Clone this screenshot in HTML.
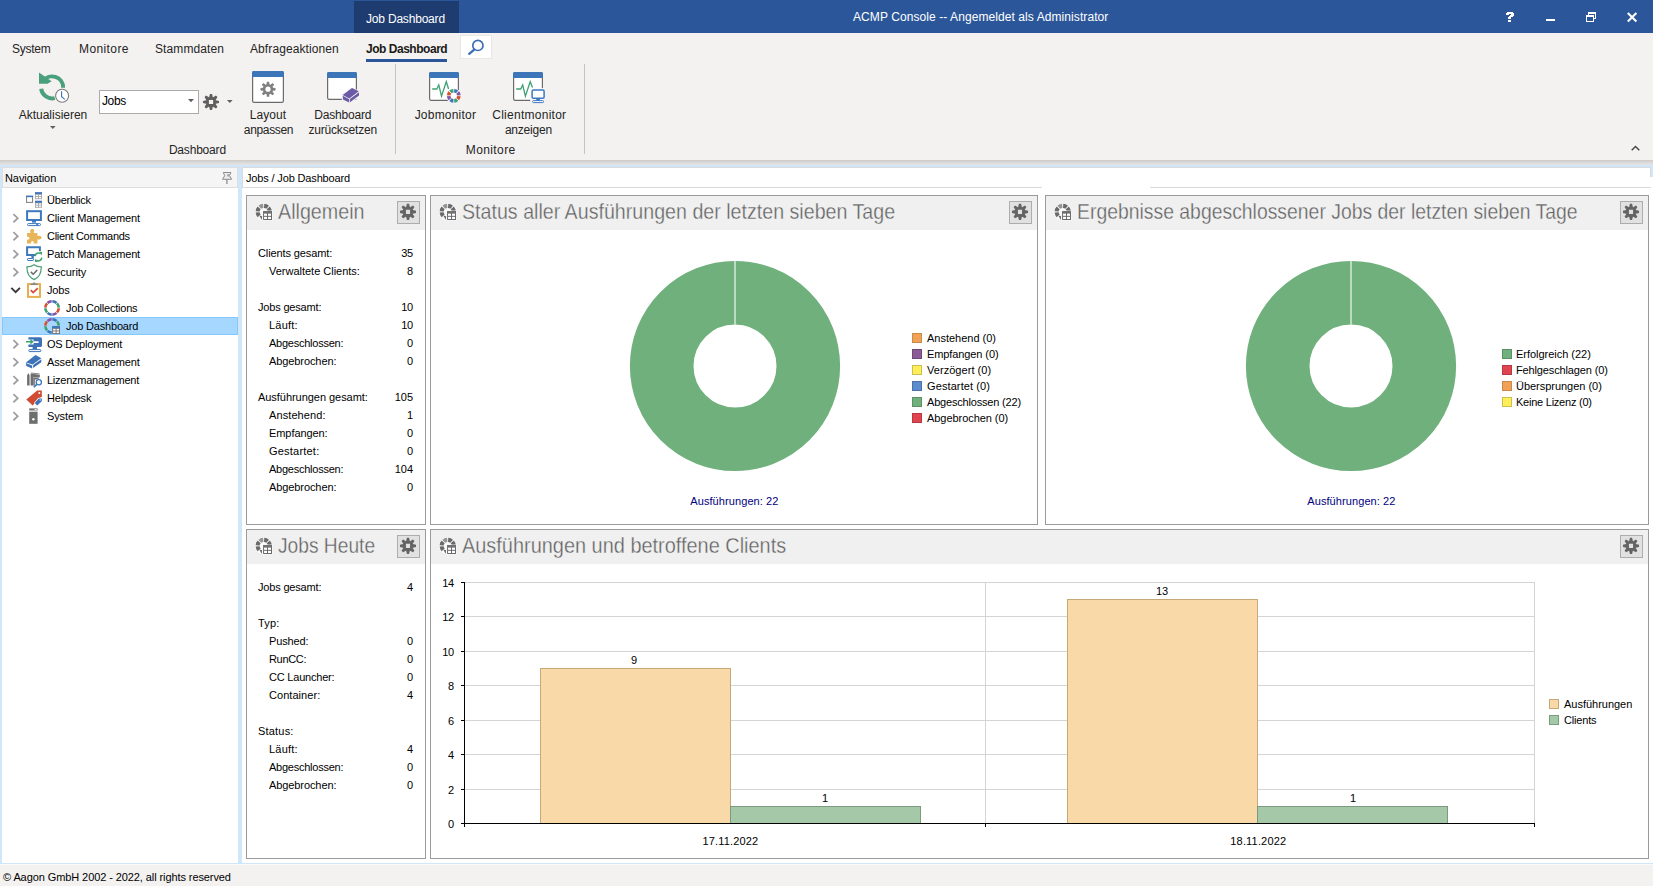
<!DOCTYPE html>
<html lang="de">
<head>
<meta charset="utf-8">
<title>ACMP Console</title>
<style>
html,body{margin:0;padding:0;}
body{width:1653px;height:886px;position:relative;overflow:hidden;background:#fff;font-family:"Liberation Sans",sans-serif;font-size:11px;color:#000;}
.a{position:absolute;}
.t{position:absolute;white-space:nowrap;line-height:1;font-size:11px;}
svg{position:absolute;overflow:visible;}
#titlebar{left:0;top:0;width:1653px;height:33px;background:#2b579a;}
#ctxtab{left:354px;top:1px;width:105px;height:32px;background:#1e3c6f;}
#ribbon{left:0;top:33px;width:1653px;height:127px;background:#f3f2f1;}
.sep{width:1px;background:#c6c4c2;top:64px;height:90px;}
.g{background:#dadada;}
.bl{background:#cfe6fb;}
.sel{left:2px;top:317px;width:236px;height:18px;background:#a6d8ff;border:1px solid #84c8fb;box-sizing:border-box;}
.panel{border:1px solid #9b9b9b;box-sizing:border-box;background:#fff;}
.phead{position:absolute;left:0;top:0;right:0;height:34px;background:#f0f0f0;}
.ptitle{position:absolute;top:4px;left:31px;font-size:21.5px;color:#606060;white-space:nowrap;line-height:24px;transform-origin:0 50%;-webkit-text-stroke:0.35px #f0f0f0;}
.gearbtn{position:absolute;top:5px;right:5px;width:23px;height:23px;box-sizing:border-box;border:1px solid #adadad;background:#e1e1e1;}
.sw{position:absolute;width:10px;height:10px;box-sizing:border-box;}
</style>
</head>
<body>
<div class="a" id="titlebar"></div><div class="a" id="ctxtab"></div>
<div class="t" style="top:13px;left:366px;font-size:12px;color:#fff;letter-spacing:-0.192px;">Job Dashboard</div>
<div class="t" style="top:11px;left:853px;font-size:12px;color:#fff;letter-spacing:0.08px;">ACMP Console -- Angemeldet als Administrator</div>
<svg style="left:0;top:0" width="1653" height="886" ><g shape-rendering="crispEdges"><rect x="1507" y="12" width="6" height="1" fill="#fff"/><rect x="1506" y="13" width="8" height="1" fill="#fff"/><rect x="1506" y="14" width="3" height="1" fill="#fff"/><rect x="1511" y="14" width="3" height="1" fill="#fff"/><rect x="1510" y="15" width="4" height="1" fill="#fff"/><rect x="1509" y="16" width="4" height="1" fill="#fff"/><rect x="1508" y="17" width="3" height="1" fill="#fff"/><rect x="1508" y="18" width="3" height="1" fill="#fff"/><rect x="1508" y="20" width="3" height="1" fill="#fff"/><rect x="1508" y="21" width="3" height="1" fill="#fff"/><rect x="1546" y="19" width="9" height="2" fill="#fff"/><rect x="1588" y="12" width="8" height="1" fill="#fff"/><rect x="1588" y="13" width="8" height="1" fill="#fff"/><rect x="1588" y="14" width="1" height="1" fill="#fff"/><rect x="1595" y="14" width="1" height="1" fill="#fff"/><rect x="1595" y="15" width="1" height="1" fill="#fff"/><rect x="1595" y="16" width="1" height="1" fill="#fff"/><rect x="1595" y="17" width="1" height="1" fill="#fff"/><rect x="1594" y="18" width="2" height="1" fill="#fff"/><rect x="1586" y="15" width="8" height="1" fill="#fff"/><rect x="1586" y="16" width="8" height="1" fill="#fff"/><rect x="1586" y="17" width="1" height="1" fill="#fff"/><rect x="1593" y="17" width="1" height="1" fill="#fff"/><rect x="1586" y="18" width="1" height="1" fill="#fff"/><rect x="1593" y="18" width="1" height="1" fill="#fff"/><rect x="1586" y="19" width="1" height="1" fill="#fff"/><rect x="1593" y="19" width="1" height="1" fill="#fff"/><rect x="1586" y="20" width="1" height="1" fill="#fff"/><rect x="1593" y="20" width="1" height="1" fill="#fff"/><rect x="1586" y="21" width="8" height="1" fill="#fff"/></g><path d="M1627.8 13L1636.4 21.6M1636.4 13L1627.8 21.6" stroke="#fff" stroke-width="2.1" fill="none"/></svg>
<div class="a" id="ribbon"></div>
<div class="t" style="top:43px;left:12px;font-size:12px;color:#252423;letter-spacing:-0.253px;">System</div>
<div class="t" style="top:43px;left:79px;font-size:12px;color:#252423;letter-spacing:0.402px;">Monitore</div>
<div class="t" style="top:43px;left:155px;font-size:12px;color:#252423;letter-spacing:0.105px;">Stammdaten</div>
<div class="t" style="top:43px;left:250px;font-size:12px;color:#252423;letter-spacing:0.093px;">Abfrageaktionen</div>
<div class="t" style="top:43px;left:366px;font-size:12px;font-weight:bold;color:#1b1a19;letter-spacing:-0.474px;">Job Dashboard</div>
<div class="a" style="left:366px;top:59px;width:81px;height:3px;background:#2b579a;"></div>
<div class="a" style="left:461px;top:36px;width:30px;height:22px;background:#fff;box-shadow:0 0 0 1px #e9e8e7;"></div>
<svg style="left:0;top:0" width="1653" height="886" ><circle cx="477.9" cy="45.4" r="5.1" fill="none" stroke="#3c6fb2" stroke-width="1.7"/><path d="M473.9 49.9L469.2 53.8" stroke="#3c6fb2" stroke-width="2.3" fill="none" stroke-linecap="round"/></svg>
<svg style="left:0;top:0" width="1653" height="886" ><path d="M42.77 81.57A11.0 11.0 0 0 1 63.09 87.78" fill="none" stroke="#4a9f7c" stroke-width="4"/><path d="M41.18 88.74A11.0 11.0 0 0 0 54.76 98.07" fill="none" stroke="#4a9f7c" stroke-width="4"/><path d="M39 72.4L39 83.8L47.5 83.8L51.6 81.2Z" fill="#4a9f7c"/><circle cx="62.1" cy="95.8" r="6.5" fill="#fff" stroke="#7c7c7c" stroke-width="1.1"/><path d="M61.6 91.3V96.8L64.8 99.4" fill="none" stroke="#3c6fc0" stroke-width="1.1"/><path d="M209.14 97.15 L209.94 93.97 L212.06 93.97 L212.86 97.15 L213.12 97.25 L215.93 95.57 L217.43 97.07 L215.75 99.88 L215.85 100.14 L219.03 100.94 L219.03 103.06 L215.85 103.86 L215.75 104.12 L217.43 106.93 L215.93 108.43 L213.12 106.75 L212.86 106.85 L212.06 110.03 L209.94 110.03 L209.14 106.85 L208.88 106.75 L206.07 108.43 L204.57 106.93 L206.25 104.12 L206.15 103.86 L202.97 103.06 L202.97 100.94 L206.15 100.14 L206.25 99.88 L204.57 97.07 L206.07 95.57 L208.88 97.25Z M208.90 99.90v4.20h4.20v-4.20Z" fill="#5f5f5f" fill-rule="evenodd"/><rect x="252.6" y="71.6" width="30.8" height="30.8" rx="1.6" fill="#fff" stroke="#6b6b6b" stroke-width="1.2"/><path d="M252 77v-4.4a1.6 1.6 0 0 1 1.6 -1.6h28.8a1.6 1.6 0 0 1 1.6 1.6v4.4z" fill="#3d76b8"/><path d="M266.57 84.20 L266.81 81.69 L269.19 81.69 L269.43 84.20 L270.52 84.65 L272.47 83.05 L274.15 84.73 L272.55 86.68 L273.00 87.77 L275.51 88.01 L275.51 90.39 L273.00 90.63 L272.55 91.72 L274.15 93.67 L272.47 95.35 L270.52 93.75 L269.43 94.20 L269.19 96.71 L266.81 96.71 L266.57 94.20 L265.48 93.75 L263.53 95.35 L261.85 93.67 L263.45 91.72 L263.00 90.63 L260.49 90.39 L260.49 88.01 L263.00 87.77 L263.45 86.68 L261.85 84.73 L263.53 83.05 L265.48 84.65Z M265.40 89.20a2.6 2.6 0 1 0 5.2 0a2.6 2.6 0 1 0 -5.2 0Z" fill="#7f7f7f" fill-rule="evenodd"/><rect x="327.6" y="72.6" width="28.8" height="26.8" rx="1.6" fill="#fff" stroke="#6b6b6b" stroke-width="1.2"/><path d="M327 78v-4.4a1.6 1.6 0 0 1 1.6 -1.6h26.8a1.6 1.6 0 0 1 1.6 1.6v4.4z" fill="#3d76b8"/><path d="M341.6 94.6L352 87.2L360 91.2L360 96.4L349.6 103.4L341.8 99.8Z" fill="#f3f2f1"/><path d="M342.7 94.9L352 87.9L358.7 91.2L349.3 98.5Z" fill="#6b5ba7"/><path d="M342.7 95.7L349.2 99.2L349.2 102.5L343 99.4Z" fill="#6b5ba7"/><path d="M350 99L359 92.2L359 95.6L350 102.3Z" fill="#6b5ba7"/><rect x="429.6" y="72.6" width="28.8" height="27.8" rx="1.6" fill="#fff" stroke="#6b6b6b" stroke-width="1.2"/><path d="M429 78v-4.4a1.6 1.6 0 0 1 1.6 -1.6h26.8a1.6 1.6 0 0 1 1.6 1.6v4.4z" fill="#3d76b8"/><path d="M432.2 89H436.8L438.8 84.9L441.5 96.2L446.3 81.7L448.6 89" fill="none" stroke="#3fa174" stroke-width="1.3" stroke-linejoin="miter"/><circle cx="453.8" cy="95.8" r="7.6" fill="#f3f2f1"/><circle cx="453.8" cy="95.8" r="5" fill="#fff"/><path d="M454.20 90.72A5.1 5.1 0 0 1 457.11 91.92" fill="none" stroke="#3d74b9" stroke-width="3.6000000000000005"/><path d="M457.68 92.49A5.1 5.1 0 0 1 458.88 95.40" fill="none" stroke="#8653a6" stroke-width="3.6000000000000005"/><path d="M458.88 96.20A5.1 5.1 0 0 1 457.68 99.11" fill="none" stroke="#d8512f" stroke-width="3.6000000000000005"/><path d="M457.11 99.68A5.1 5.1 0 0 1 454.20 100.88" fill="none" stroke="#3fa174" stroke-width="3.6000000000000005"/><path d="M453.40 100.88A5.1 5.1 0 0 1 450.49 99.68" fill="none" stroke="#3d74b9" stroke-width="3.6000000000000005"/><path d="M449.92 99.11A5.1 5.1 0 0 1 448.72 96.20" fill="none" stroke="#8653a6" stroke-width="3.6000000000000005"/><path d="M448.72 95.40A5.1 5.1 0 0 1 449.92 92.49" fill="none" stroke="#d8512f" stroke-width="3.6000000000000005"/><path d="M450.49 91.92A5.1 5.1 0 0 1 453.40 90.72" fill="none" stroke="#3fa174" stroke-width="3.6000000000000005"/><rect x="513.6" y="72.6" width="28.8" height="27.8" rx="1.6" fill="#fff" stroke="#6b6b6b" stroke-width="1.2"/><path d="M513 78v-4.4a1.6 1.6 0 0 1 1.6 -1.6h26.8a1.6 1.6 0 0 1 1.6 1.6v4.4z" fill="#3d76b8"/><path d="M516.2 89H520.7L522.7 84.9L525.4 96.2L530.2 81.7L532.5 87.5" fill="none" stroke="#3fa174" stroke-width="1.3"/><rect x="530.2" y="88.3" width="16" height="15.6" fill="#f3f2f1"/><rect x="530.4" y="88.4" width="13" height="11" fill="#fff"/><rect x="532.1" y="90.1" width="12" height="8.2" rx="1.2" fill="#fff" stroke="#3d78c2" stroke-width="1.5"/><rect x="536.2" y="98.6" width="3.8" height="2" fill="#3d78c2"/><rect x="532.7" y="100.6" width="10.8" height="2" rx="0.8" fill="#fff" stroke="#3d78c2" stroke-width="1"/></svg>
<div class="a" style="left:99px;top:90px;width:100px;height:24px;background:#fff;border:1px solid #ababab;box-sizing:border-box;"></div>
<div class="t" style="top:95px;left:102px;font-size:12px;letter-spacing:-0.39px;">Jobs</div>
<svg style="left:188px;top:99px" width="6" height="4"><path d="M0 0h6l-3 3.2z" fill="#605e5c"/></svg>
<svg style="left:227px;top:100px" width="6" height="4"><path d="M0 0h5.6l-2.8 3z" fill="#605e5c"/></svg>
<svg style="left:50px;top:126px" width="6" height="4"><path d="M0 0h5.6l-2.8 3z" fill="#605e5c"/></svg>
<div class="t" style="top:109px;left:53px;transform:translateX(-50%);font-size:12px;color:#252423;letter-spacing:-0.023px;">Aktualisieren</div>
<div class="t" style="top:109px;left:268px;transform:translateX(-50%);font-size:12px;color:#252423;letter-spacing:0.045px;">Layout</div>
<div class="t" style="top:124px;left:268.5px;transform:translateX(-50%);font-size:12px;color:#252423;letter-spacing:-0.331px;">anpassen</div>
<div class="t" style="top:109px;left:342.7px;transform:translateX(-50%);font-size:12px;color:#252423;letter-spacing:-0.191px;">Dashboard</div>
<div class="t" style="top:124px;left:342.7px;transform:translateX(-50%);font-size:12px;color:#252423;letter-spacing:-0.184px;">zurücksetzen</div>
<div class="t" style="top:109px;left:445.4px;transform:translateX(-50%);font-size:12px;color:#252423;letter-spacing:0.212px;">Jobmonitor</div>
<div class="t" style="top:109px;left:529.3px;transform:translateX(-50%);font-size:12px;color:#252423;letter-spacing:0.269px;">Clientmonitor</div>
<div class="t" style="top:124px;left:528.4px;transform:translateX(-50%);font-size:12px;color:#252423;letter-spacing:-0.215px;">anzeigen</div>
<div class="t" style="top:144px;left:197.4px;transform:translateX(-50%);font-size:12px;color:#252423;letter-spacing:-0.191px;">Dashboard</div>
<div class="t" style="top:144px;left:490.7px;transform:translateX(-50%);font-size:12px;color:#252423;letter-spacing:0.402px;">Monitore</div>
<div class="a sep" style="left:395px;"></div><div class="a sep" style="left:584px;"></div>
<svg style="left:1631px;top:145px" width="9" height="6"><path d="M0.7 5.3l3.8-3.8 3.8 3.8" fill="none" stroke="#444" stroke-width="1.4"/></svg>
<div class="a" style="left:0;top:160px;width:1653px;height:5px;background:linear-gradient(#cccbca,#dad9d8 50%,#e6e5e4);"></div>
<div class="a bl" style="left:0;top:165px;width:1653px;height:2px;"></div>
<div class="a bl" style="left:0;top:167px;width:2px;height:697px;"></div>
<div class="a bl" style="left:238px;top:167px;width:4px;height:696px;"></div>
<div class="a bl" style="left:0;top:863px;width:1653px;height:1px;"></div>
<div class="a bl" style="left:1651px;top:165px;width:2px;height:12px;"></div>
<div class="a" style="left:2px;top:167px;width:236px;height:21px;background:#f5f5f5;border:1px solid #dedede;box-sizing:border-box;"></div>
<div class="t" style="top:173px;left:5px;letter-spacing:-0.078px;">Navigation</div>
<svg style="left:0;top:0" width="1653" height="886" ><path d="M223.3 172.5H230.9L229.5 175.7L231.7 179.3H222.5L224.7 175.7Z" fill="#ececec" stroke="#8c8c8c" stroke-width="1" stroke-linejoin="round"/><circle cx="228.5" cy="175.3" r="1.4" fill="#a9a9a9"/><path d="M226.9 179.6V184" fill="none" stroke="#8c8c8c" stroke-width="1.3"/></svg>
<div class="a g" style="left:242px;top:167px;width:1409px;height:1px;"></div>
<div class="a g" style="left:242px;top:167px;width:1px;height:21px;"></div>
<div class="a g" style="left:1650px;top:167px;width:1px;height:10px;"></div>
<div class="a g" style="left:242px;top:187px;width:800px;height:1px;"></div>
<div class="a g" style="left:1150px;top:187px;width:501px;height:1px;"></div>
<div class="t" style="top:173px;left:246px;letter-spacing:-0.151px;">Jobs / Job Dashboard</div>
<div class="a sel"></div>
<div class="t" style="top:195px;left:47px;letter-spacing:-0.218px;">Überblick</div>
<div class="t" style="top:213px;left:47px;letter-spacing:-0.141px;">Client Management</div>
<div class="t" style="top:231px;left:47px;letter-spacing:-0.315px;">Client Commands</div>
<div class="t" style="top:249px;left:47px;letter-spacing:-0.149px;">Patch Management</div>
<div class="t" style="top:267px;left:47px;letter-spacing:-0.069px;">Security</div>
<div class="t" style="top:285px;left:47px;letter-spacing:-0.188px;">Jobs</div>
<div class="t" style="top:303px;left:66px;letter-spacing:-0.213px;">Job Collections</div>
<div class="t" style="top:321px;left:66px;letter-spacing:-0.185px;">Job Dashboard</div>
<div class="t" style="top:339px;left:47px;letter-spacing:-0.197px;">OS Deployment</div>
<div class="t" style="top:357px;left:47px;letter-spacing:-0.124px;">Asset Management</div>
<div class="t" style="top:375px;left:47px;letter-spacing:-0.251px;">Lizenzmanagement</div>
<div class="t" style="top:393px;left:47px;letter-spacing:-0.207px;">Helpdesk</div>
<div class="t" style="top:411px;left:47px;letter-spacing:-0.115px;">System</div>
<svg style="left:0;top:0" width="1653" height="886" ><path d="M13.4 214.1l4.3 4.1l-4.3 4.1" fill="none" stroke="#9e9e9e" stroke-width="1.8"/><path d="M13.4 232.1l4.3 4.1l-4.3 4.1" fill="none" stroke="#9e9e9e" stroke-width="1.8"/><path d="M13.4 250.1l4.3 4.1l-4.3 4.1" fill="none" stroke="#9e9e9e" stroke-width="1.8"/><path d="M13.4 268.1l4.3 4.1l-4.3 4.1" fill="none" stroke="#9e9e9e" stroke-width="1.8"/><path d="M11.3 287.9l4.3 4.2l4.3-4.2" fill="none" stroke="#3c3c3c" stroke-width="2"/><path d="M13.4 340.1l4.3 4.1l-4.3 4.1" fill="none" stroke="#9e9e9e" stroke-width="1.8"/><path d="M13.4 358.1l4.3 4.1l-4.3 4.1" fill="none" stroke="#9e9e9e" stroke-width="1.8"/><path d="M13.4 376.1l4.3 4.1l-4.3 4.1" fill="none" stroke="#9e9e9e" stroke-width="1.8"/><path d="M13.4 394.1l4.3 4.1l-4.3 4.1" fill="none" stroke="#9e9e9e" stroke-width="1.8"/><path d="M13.4 412.1l4.3 4.1l-4.3 4.1" fill="none" stroke="#9e9e9e" stroke-width="1.8"/></svg>
<svg style="left:0;top:0" width="1653" height="886" ><rect x="26.6" y="196.4" width="6" height="6" fill="#fff" stroke="#7a7a7a" stroke-width="1"/><rect x="26.1" y="195.6" width="7" height="1.6" fill="#3d78be"/><rect x="35" y="192.2" width="7" height="7" fill="#a9a9a9"/><rect x="35" y="192.2" width="7" height="2.0" fill="#3d78be"/><rect x="35.90" y="194.80" width="2.15" height="1.30" fill="#fff"/><rect x="35.90" y="197.00" width="2.15" height="1.30" fill="#fff"/><rect x="38.95" y="194.80" width="2.15" height="1.30" fill="#fff"/><rect x="38.95" y="197.00" width="2.15" height="1.30" fill="#fff"/><rect x="35" y="200.8" width="7" height="7" fill="#a9a9a9"/><rect x="35" y="200.8" width="7" height="2.0" fill="#3d78be"/><rect x="35.90" y="203.40" width="2.15" height="1.30" fill="#fff"/><rect x="35.90" y="205.60" width="2.15" height="1.30" fill="#fff"/><rect x="38.95" y="203.40" width="2.15" height="1.30" fill="#fff"/><rect x="38.95" y="205.60" width="2.15" height="1.30" fill="#fff"/><rect x="27.1" y="211.2" width="13.8" height="8.8" fill="#fff" stroke="#3d78be" stroke-width="2"/><rect x="32" y="221" width="4" height="1.6" fill="#3d78be"/><rect x="27.5" y="223.6" width="13" height="2" rx="0.8" fill="#fff" stroke="#3d78be" stroke-width="1"/><rect x="36.2" y="224" width="2" height="1.2" fill="#3d78be"/><path d="M27 233h3.6c-1.6-3.6 4.6-3.6 3.2 0H37.4v3c3.8-1.8 3.8 4.8 0 3.2V243.4H33.6c1.2-3.2-3.4-3.2-2.4 0H27V239.6c3.2 1.2 3.2-3.6 0-2.6Z" fill="#e8b458"/><circle cx="32.2" cy="230.6" r="1.9" fill="#e8b458"/><circle cx="39.6" cy="237.6" r="1.9" fill="#e8b458"/><path d="M39.9 251V247.2H27.1V255.1H35" fill="none" stroke="#3d78be" stroke-width="2"/><rect x="31.4" y="256" width="2.4" height="2.4" fill="#3d78be"/><rect x="27.5" y="258.5" width="6" height="2" rx="0.6" fill="#fff" stroke="#3d78be" stroke-width="1"/><path d="M35.2 256.2A3.4 3.4 0 0 1 40.6 253.6" fill="none" stroke="#3fa16f" stroke-width="1.5"/><path d="M39.2 251.6L42.2 252L41.6 255.4Z" fill="#3fa16f"/><path d="M41.8 257.6A3.4 3.4 0 0 1 36.4 260.2" fill="none" stroke="#3fa16f" stroke-width="1.5"/><path d="M37.8 262.2L34.8 261.8L35.4 258.4Z" fill="#3fa16f"/><path d="M34.1 264.7C31.8 266.4 29.4 266.9 26.9 266.9C26.9 273.4 29.2 277.4 34.1 279.6C39 277.4 41.3 273.4 41.3 266.9C38.8 266.9 36.4 266.4 34.1 264.7Z" fill="#fff" stroke="#4b9f79" stroke-width="1.2"/><path d="M30.8 271.9L33.2 274.3L37.3 270.1" fill="none" stroke="#6a6a6a" stroke-width="1.5"/><rect x="28" y="284.1" width="12" height="12.8" fill="#fff" stroke="#e9ae50" stroke-width="2"/><path d="M30.6 285V283.6H32.6L34 281.9L35.5 283.6H37.5V285Z" fill="#8a8a8a"/><path d="M30.8 290.2L33.2 292.6L37.8 288.1" fill="none" stroke="#d94b38" stroke-width="1.8"/><path d="M52.37 301.21A6.7 6.7 0 0 1 56.56 302.94" fill="none" stroke="#3d74b9" stroke-width="2.5999999999999996"/><path d="M57.01 303.39A6.7 6.7 0 0 1 58.74 307.58" fill="none" stroke="#3fa174" stroke-width="2.5999999999999996"/><path d="M58.74 308.22A6.7 6.7 0 0 1 57.01 312.41" fill="none" stroke="#d8512f" stroke-width="2.5999999999999996"/><path d="M56.56 312.86A6.7 6.7 0 0 1 52.37 314.59" fill="none" stroke="#8653a6" stroke-width="2.5999999999999996"/><path d="M51.73 314.59A6.7 6.7 0 0 1 47.54 312.86" fill="none" stroke="#3d74b9" stroke-width="2.5999999999999996"/><path d="M47.09 312.41A6.7 6.7 0 0 1 45.36 308.22" fill="none" stroke="#3fa174" stroke-width="2.5999999999999996"/><path d="M45.36 307.58A6.7 6.7 0 0 1 47.09 303.39" fill="none" stroke="#d8512f" stroke-width="2.5999999999999996"/><path d="M47.54 302.94A6.7 6.7 0 0 1 51.73 301.21" fill="none" stroke="#8653a6" stroke-width="2.5999999999999996"/><path d="M52.37 319.21A6.7 6.7 0 0 1 56.56 320.94" fill="none" stroke="#3d74b9" stroke-width="2.5999999999999996"/><path d="M57.01 321.39A6.7 6.7 0 0 1 58.74 325.58" fill="none" stroke="#3fa174" stroke-width="2.5999999999999996"/><path d="M51.73 332.59A6.7 6.7 0 0 1 47.54 330.86" fill="none" stroke="#3d74b9" stroke-width="2.5999999999999996"/><path d="M47.09 330.41A6.7 6.7 0 0 1 45.36 326.22" fill="none" stroke="#3fa174" stroke-width="2.5999999999999996"/><path d="M45.36 325.58A6.7 6.7 0 0 1 47.09 321.39" fill="none" stroke="#d8512f" stroke-width="2.5999999999999996"/><path d="M47.54 320.94A6.7 6.7 0 0 1 51.73 319.21" fill="none" stroke="#8653a6" stroke-width="2.5999999999999996"/><rect x="52.2" y="326.2" width="7.8" height="7.8" fill="#6d6d6d"/><rect x="52.2" y="326.2" width="7.8" height="2.0" fill="#3d78be"/><rect x="53.10" y="328.80" width="2.55" height="1.70" fill="#fff"/><rect x="53.10" y="331.40" width="2.55" height="1.70" fill="#fff"/><rect x="56.55" y="328.80" width="2.55" height="1.70" fill="#fff"/><rect x="56.55" y="331.40" width="2.55" height="1.70" fill="#fff"/><path d="M28.4 337.2H40.4Q42 337.2 42 338.8V345.4Q42 347 40.4 347H28.4V344.4H33.6V343H38.6V341.2H33.6V339.6H28.4Z" fill="#3d72b8"/><rect x="32.6" y="347" width="4.4" height="2.2" fill="#3d72b8"/><rect x="28.8" y="349.6" width="12" height="2" rx="0.8" fill="#fff" stroke="#3d72b8" stroke-width="1"/><path d="M26 341H30.4V338.8L33.8 341.7L30.4 344.6V342.6H26Z" fill="#3fa16f"/><path d="M25.9 362.4L35.5 354.9L41.3 358.3L32.6 364.5Z" fill="#3d72b8"/><path d="M25.9 363.1L32.1 365.6V368.5L26.3 365.9Z" fill="#3d72b8"/><path d="M33.1 365.1L41.3 359.3V362.2L33.1 368Z" fill="#3d72b8"/><path d="M27.1 385.4V375.4L28.3 373L29.6 375.4V385.4Z" fill="#6e6e6e"/><path d="M30.6 385.4V373.6L39.8 374.8V377.6H33V385.4Z" fill="#6e6e6e"/><path d="M31 373L39.6 373.9" stroke="#8a8a8a" stroke-width="1" fill="none"/><path d="M34 385.4V378.6H38.6" stroke="#6e6e6e" stroke-width="1.6" fill="none"/><circle cx="38.8" cy="382.2" r="3.3" fill="#fff"/><circle cx="38.8" cy="382.2" r="2.6" fill="#fff" stroke="#3d78be" stroke-width="1.3"/><path d="M36.8 384.4L33.8 387.2" stroke="#3d78be" stroke-width="1.6" fill="none"/><path d="M26.3 399.6L37.2 390.4H41.8V396.3L32.6 405.5Z" fill="#d04b31"/><circle cx="39.3" cy="392.9" r="1" fill="#fff"/><path d="M33.9 403L38.4 397.8H42.2V401.5L37.2 406.2Z" fill="#fff"/><path d="M34.7 403L38.8 398.4H41.8V401.3L37.2 405.5Z" fill="#3d72b8"/><circle cx="40.2" cy="399.9" r="0.6" fill="#fff"/><rect x="29.2" y="408.4" width="8.4" height="2.1" fill="#6e6e6e"/><rect x="34.6" y="409" width="2.2" height="0.9" fill="#fff"/><rect x="29.2" y="411.7" width="8.4" height="12.1" fill="#6e6e6e"/><circle cx="33.4" cy="419.3" r="1.2" fill="#fff"/></svg>
<div class="a panel" style="left:246px;top:195px;width:180px;height:330px;"><div class="phead"></div><div class="ptitle" style="transform:scaleX(0.9161);">Allgemein</div><div class="gearbtn"></div></div>
<svg style="left:0;top:0" width="1653" height="886" ><circle cx="263.7" cy="211.9" r="8.7" fill="#f9f9f9"/><path d="M264.14 205.87A6.05 6.05 0 0 1 267.66 207.32" fill="none" stroke="#6a6a6a" stroke-width="4.1"/><path d="M268.28 207.94A6.05 6.05 0 0 1 269.73 211.46" fill="none" stroke="#6a6a6a" stroke-width="4.1"/><path d="M259.12 215.86A6.05 6.05 0 0 1 257.67 212.34" fill="none" stroke="#6a6a6a" stroke-width="4.1"/><path d="M257.67 211.46A6.05 6.05 0 0 1 259.12 207.94" fill="none" stroke="#6a6a6a" stroke-width="4.1"/><path d="M259.74 207.32A6.05 6.05 0 0 1 263.26 205.87" fill="none" stroke="#959595" stroke-width="4.1"/><path d="M259.30 215.50L262.10 216.30L261.80 219.90Z" fill="#6a6a6a"/><rect x="262.60" y="210.60" width="9.9" height="9.9" fill="#f9f9f9"/><rect x="263.15" y="211.15" width="8.8" height="8.8" fill="#5e5e5e"/><rect x="263.15" y="211.15" width="8.8" height="1.8" fill="#727272"/><rect x="264.05" y="213.55" width="3.05" height="2.30" fill="#fff"/><rect x="264.05" y="216.75" width="3.05" height="2.30" fill="#fff"/><rect x="268.00" y="213.55" width="3.05" height="2.30" fill="#fff"/><rect x="268.00" y="216.75" width="3.05" height="2.30" fill="#fff"/><path d="M406.14 207.05 L406.94 203.87 L409.06 203.87 L409.86 207.05 L410.12 207.15 L412.93 205.47 L414.43 206.97 L412.75 209.78 L412.85 210.04 L416.03 210.84 L416.03 212.96 L412.85 213.76 L412.75 214.02 L414.43 216.83 L412.93 218.33 L410.12 216.65 L409.86 216.75 L409.06 219.93 L406.94 219.93 L406.14 216.75 L405.88 216.65 L403.07 218.33 L401.57 216.83 L403.25 214.02 L403.15 213.76 L399.97 212.96 L399.97 210.84 L403.15 210.04 L403.25 209.78 L401.57 206.97 L403.07 205.47 L405.88 207.15Z M405.95 209.85v4.10h4.10v-4.10Z" fill="#646464" fill-rule="evenodd"/></svg>
<div class="a panel" style="left:430px;top:195px;width:608px;height:330px;"><div class="phead"></div><div class="ptitle" style="transform:scaleX(0.9135);">Status aller Ausführungen der letzten sieben Tage</div><div class="gearbtn"></div></div>
<svg style="left:0;top:0" width="1653" height="886" ><circle cx="447.7" cy="211.9" r="8.7" fill="#f9f9f9"/><path d="M448.14 205.87A6.05 6.05 0 0 1 451.66 207.32" fill="none" stroke="#6a6a6a" stroke-width="4.1"/><path d="M452.28 207.94A6.05 6.05 0 0 1 453.73 211.46" fill="none" stroke="#6a6a6a" stroke-width="4.1"/><path d="M443.12 215.86A6.05 6.05 0 0 1 441.67 212.34" fill="none" stroke="#6a6a6a" stroke-width="4.1"/><path d="M441.67 211.46A6.05 6.05 0 0 1 443.12 207.94" fill="none" stroke="#6a6a6a" stroke-width="4.1"/><path d="M443.74 207.32A6.05 6.05 0 0 1 447.26 205.87" fill="none" stroke="#959595" stroke-width="4.1"/><path d="M443.30 215.50L446.10 216.30L445.80 219.90Z" fill="#6a6a6a"/><rect x="446.60" y="210.60" width="9.9" height="9.9" fill="#f9f9f9"/><rect x="447.15" y="211.15" width="8.8" height="8.8" fill="#5e5e5e"/><rect x="447.15" y="211.15" width="8.8" height="1.8" fill="#727272"/><rect x="448.05" y="213.55" width="3.05" height="2.30" fill="#fff"/><rect x="448.05" y="216.75" width="3.05" height="2.30" fill="#fff"/><rect x="452.00" y="213.55" width="3.05" height="2.30" fill="#fff"/><rect x="452.00" y="216.75" width="3.05" height="2.30" fill="#fff"/><path d="M1018.14 207.05 L1018.94 203.87 L1021.06 203.87 L1021.86 207.05 L1022.12 207.15 L1024.93 205.47 L1026.43 206.97 L1024.75 209.78 L1024.85 210.04 L1028.03 210.84 L1028.03 212.96 L1024.85 213.76 L1024.75 214.02 L1026.43 216.83 L1024.93 218.33 L1022.12 216.65 L1021.86 216.75 L1021.06 219.93 L1018.94 219.93 L1018.14 216.75 L1017.88 216.65 L1015.07 218.33 L1013.57 216.83 L1015.25 214.02 L1015.15 213.76 L1011.97 212.96 L1011.97 210.84 L1015.15 210.04 L1015.25 209.78 L1013.57 206.97 L1015.07 205.47 L1017.88 207.15Z M1017.95 209.85v4.10h4.10v-4.10Z" fill="#646464" fill-rule="evenodd"/></svg>
<div class="a panel" style="left:1045px;top:195px;width:604px;height:330px;"><div class="phead"></div><div class="ptitle" style="transform:scaleX(0.9013);">Ergebnisse abgeschlossener Jobs der letzten sieben Tage</div><div class="gearbtn"></div></div>
<svg style="left:0;top:0" width="1653" height="886" ><circle cx="1062.7" cy="211.9" r="8.7" fill="#f9f9f9"/><path d="M1063.14 205.87A6.05 6.05 0 0 1 1066.66 207.32" fill="none" stroke="#6a6a6a" stroke-width="4.1"/><path d="M1067.28 207.94A6.05 6.05 0 0 1 1068.73 211.46" fill="none" stroke="#6a6a6a" stroke-width="4.1"/><path d="M1058.12 215.86A6.05 6.05 0 0 1 1056.67 212.34" fill="none" stroke="#6a6a6a" stroke-width="4.1"/><path d="M1056.67 211.46A6.05 6.05 0 0 1 1058.12 207.94" fill="none" stroke="#6a6a6a" stroke-width="4.1"/><path d="M1058.74 207.32A6.05 6.05 0 0 1 1062.26 205.87" fill="none" stroke="#959595" stroke-width="4.1"/><path d="M1058.30 215.50L1061.10 216.30L1060.80 219.90Z" fill="#6a6a6a"/><rect x="1061.60" y="210.60" width="9.9" height="9.9" fill="#f9f9f9"/><rect x="1062.15" y="211.15" width="8.8" height="8.8" fill="#5e5e5e"/><rect x="1062.15" y="211.15" width="8.8" height="1.8" fill="#727272"/><rect x="1063.05" y="213.55" width="3.05" height="2.30" fill="#fff"/><rect x="1063.05" y="216.75" width="3.05" height="2.30" fill="#fff"/><rect x="1067.00" y="213.55" width="3.05" height="2.30" fill="#fff"/><rect x="1067.00" y="216.75" width="3.05" height="2.30" fill="#fff"/><path d="M1629.14 207.05 L1629.94 203.87 L1632.06 203.87 L1632.86 207.05 L1633.12 207.15 L1635.93 205.47 L1637.43 206.97 L1635.75 209.78 L1635.85 210.04 L1639.03 210.84 L1639.03 212.96 L1635.85 213.76 L1635.75 214.02 L1637.43 216.83 L1635.93 218.33 L1633.12 216.65 L1632.86 216.75 L1632.06 219.93 L1629.94 219.93 L1629.14 216.75 L1628.88 216.65 L1626.07 218.33 L1624.57 216.83 L1626.25 214.02 L1626.15 213.76 L1622.97 212.96 L1622.97 210.84 L1626.15 210.04 L1626.25 209.78 L1624.57 206.97 L1626.07 205.47 L1628.88 207.15Z M1628.95 209.85v4.10h4.10v-4.10Z" fill="#646464" fill-rule="evenodd"/></svg>
<div class="a panel" style="left:246px;top:529px;width:180px;height:330px;"><div class="phead"></div><div class="ptitle" style="transform:scaleX(0.8927);">Jobs Heute</div><div class="gearbtn"></div></div>
<svg style="left:0;top:0" width="1653" height="886" ><circle cx="263.7" cy="545.9" r="8.7" fill="#f9f9f9"/><path d="M264.14 539.87A6.05 6.05 0 0 1 267.66 541.32" fill="none" stroke="#6a6a6a" stroke-width="4.1"/><path d="M268.28 541.94A6.05 6.05 0 0 1 269.73 545.46" fill="none" stroke="#6a6a6a" stroke-width="4.1"/><path d="M259.12 549.86A6.05 6.05 0 0 1 257.67 546.34" fill="none" stroke="#6a6a6a" stroke-width="4.1"/><path d="M257.67 545.46A6.05 6.05 0 0 1 259.12 541.94" fill="none" stroke="#6a6a6a" stroke-width="4.1"/><path d="M259.74 541.32A6.05 6.05 0 0 1 263.26 539.87" fill="none" stroke="#959595" stroke-width="4.1"/><path d="M259.30 549.50L262.10 550.30L261.80 553.90Z" fill="#6a6a6a"/><rect x="262.60" y="544.60" width="9.9" height="9.9" fill="#f9f9f9"/><rect x="263.15" y="545.15" width="8.8" height="8.8" fill="#5e5e5e"/><rect x="263.15" y="545.15" width="8.8" height="1.8" fill="#727272"/><rect x="264.05" y="547.55" width="3.05" height="2.30" fill="#fff"/><rect x="264.05" y="550.75" width="3.05" height="2.30" fill="#fff"/><rect x="268.00" y="547.55" width="3.05" height="2.30" fill="#fff"/><rect x="268.00" y="550.75" width="3.05" height="2.30" fill="#fff"/><path d="M406.14 541.05 L406.94 537.87 L409.06 537.87 L409.86 541.05 L410.12 541.15 L412.93 539.47 L414.43 540.97 L412.75 543.78 L412.85 544.04 L416.03 544.84 L416.03 546.96 L412.85 547.76 L412.75 548.02 L414.43 550.83 L412.93 552.33 L410.12 550.65 L409.86 550.75 L409.06 553.93 L406.94 553.93 L406.14 550.75 L405.88 550.65 L403.07 552.33 L401.57 550.83 L403.25 548.02 L403.15 547.76 L399.97 546.96 L399.97 544.84 L403.15 544.04 L403.25 543.78 L401.57 540.97 L403.07 539.47 L405.88 541.15Z M405.95 543.85v4.10h4.10v-4.10Z" fill="#646464" fill-rule="evenodd"/></svg>
<div class="a panel" style="left:430px;top:529px;width:1219px;height:330px;"><div class="phead"></div><div class="ptitle" style="transform:scaleX(0.9267);">Ausführungen und betroffene Clients</div><div class="gearbtn"></div></div>
<svg style="left:0;top:0" width="1653" height="886" ><circle cx="447.7" cy="545.9" r="8.7" fill="#f9f9f9"/><path d="M448.14 539.87A6.05 6.05 0 0 1 451.66 541.32" fill="none" stroke="#6a6a6a" stroke-width="4.1"/><path d="M452.28 541.94A6.05 6.05 0 0 1 453.73 545.46" fill="none" stroke="#6a6a6a" stroke-width="4.1"/><path d="M443.12 549.86A6.05 6.05 0 0 1 441.67 546.34" fill="none" stroke="#6a6a6a" stroke-width="4.1"/><path d="M441.67 545.46A6.05 6.05 0 0 1 443.12 541.94" fill="none" stroke="#6a6a6a" stroke-width="4.1"/><path d="M443.74 541.32A6.05 6.05 0 0 1 447.26 539.87" fill="none" stroke="#959595" stroke-width="4.1"/><path d="M443.30 549.50L446.10 550.30L445.80 553.90Z" fill="#6a6a6a"/><rect x="446.60" y="544.60" width="9.9" height="9.9" fill="#f9f9f9"/><rect x="447.15" y="545.15" width="8.8" height="8.8" fill="#5e5e5e"/><rect x="447.15" y="545.15" width="8.8" height="1.8" fill="#727272"/><rect x="448.05" y="547.55" width="3.05" height="2.30" fill="#fff"/><rect x="448.05" y="550.75" width="3.05" height="2.30" fill="#fff"/><rect x="452.00" y="547.55" width="3.05" height="2.30" fill="#fff"/><rect x="452.00" y="550.75" width="3.05" height="2.30" fill="#fff"/><path d="M1629.14 541.05 L1629.94 537.87 L1632.06 537.87 L1632.86 541.05 L1633.12 541.15 L1635.93 539.47 L1637.43 540.97 L1635.75 543.78 L1635.85 544.04 L1639.03 544.84 L1639.03 546.96 L1635.85 547.76 L1635.75 548.02 L1637.43 550.83 L1635.93 552.33 L1633.12 550.65 L1632.86 550.75 L1632.06 553.93 L1629.94 553.93 L1629.14 550.75 L1628.88 550.65 L1626.07 552.33 L1624.57 550.83 L1626.25 548.02 L1626.15 547.76 L1622.97 546.96 L1622.97 544.84 L1626.15 544.04 L1626.25 543.78 L1624.57 540.97 L1626.07 539.47 L1628.88 541.15Z M1628.95 543.85v4.10h4.10v-4.10Z" fill="#646464" fill-rule="evenodd"/></svg>
<div class="t" style="top:248px;left:258px;letter-spacing:-0.114px;">Clients gesamt:</div>
<div class="t" style="top:248px;right:1240px;letter-spacing:-0.125px;margin-right:-0.125px;">35</div>
<div class="t" style="top:266px;left:269px;letter-spacing:-0.011px;">Verwaltete Clients:</div>
<div class="t" style="top:266px;right:1240px;letter-spacing:-0.12px;margin-right:-0.12px;">8</div>
<div class="t" style="top:302px;left:258px;letter-spacing:-0.177px;">Jobs gesamt:</div>
<div class="t" style="top:302px;right:1240px;letter-spacing:-0.125px;margin-right:-0.125px;">10</div>
<div class="t" style="top:320px;left:269px;letter-spacing:0.228px;">Läuft:</div>
<div class="t" style="top:320px;right:1240px;letter-spacing:-0.125px;margin-right:-0.125px;">10</div>
<div class="t" style="top:338px;left:269px;letter-spacing:-0.241px;">Abgeschlossen:</div>
<div class="t" style="top:338px;right:1240px;letter-spacing:-0.12px;margin-right:-0.12px;">0</div>
<div class="t" style="top:356px;left:269px;letter-spacing:-0.092px;">Abgebrochen:</div>
<div class="t" style="top:356px;right:1240px;letter-spacing:-0.12px;margin-right:-0.12px;">0</div>
<div class="t" style="top:392px;left:258px;letter-spacing:-0.044px;">Ausführungen gesamt:</div>
<div class="t" style="top:392px;right:1240px;letter-spacing:-0.02px;margin-right:-0.02px;">105</div>
<div class="t" style="top:410px;left:269px;letter-spacing:0.094px;">Anstehend:</div>
<div class="t" style="top:410px;right:1240px;letter-spacing:-0.12px;margin-right:-0.12px;">1</div>
<div class="t" style="top:428px;left:269px;letter-spacing:-0.073px;">Empfangen:</div>
<div class="t" style="top:428px;right:1240px;letter-spacing:-0.12px;margin-right:-0.12px;">0</div>
<div class="t" style="top:446px;left:269px;letter-spacing:0.21px;">Gestartet:</div>
<div class="t" style="top:446px;right:1240px;letter-spacing:-0.12px;margin-right:-0.12px;">0</div>
<div class="t" style="top:464px;left:269px;letter-spacing:-0.241px;">Abgeschlossen:</div>
<div class="t" style="top:464px;right:1240px;letter-spacing:-0.02px;margin-right:-0.02px;">104</div>
<div class="t" style="top:482px;left:269px;letter-spacing:-0.092px;">Abgebrochen:</div>
<div class="t" style="top:482px;right:1240px;letter-spacing:-0.12px;margin-right:-0.12px;">0</div>
<div class="t" style="top:582px;left:258px;letter-spacing:-0.177px;">Jobs gesamt:</div>
<div class="t" style="top:582px;right:1240px;letter-spacing:-0.12px;margin-right:-0.12px;">4</div>
<div class="t" style="top:618px;left:258px;letter-spacing:0.176px;">Typ:</div>
<div class="t" style="top:636px;left:269px;letter-spacing:-0.139px;">Pushed:</div>
<div class="t" style="top:636px;right:1240px;letter-spacing:-0.12px;margin-right:-0.12px;">0</div>
<div class="t" style="top:654px;left:269px;letter-spacing:-0.321px;">RunCC:</div>
<div class="t" style="top:654px;right:1240px;letter-spacing:-0.12px;margin-right:-0.12px;">0</div>
<div class="t" style="top:672px;left:269px;letter-spacing:-0.206px;">CC Launcher:</div>
<div class="t" style="top:672px;right:1240px;letter-spacing:-0.12px;margin-right:-0.12px;">0</div>
<div class="t" style="top:690px;left:269px;letter-spacing:0.053px;">Container:</div>
<div class="t" style="top:690px;right:1240px;letter-spacing:-0.12px;margin-right:-0.12px;">4</div>
<div class="t" style="top:726px;left:258px;letter-spacing:0.193px;">Status:</div>
<div class="t" style="top:744px;left:269px;letter-spacing:0.228px;">Läuft:</div>
<div class="t" style="top:744px;right:1240px;letter-spacing:-0.12px;margin-right:-0.12px;">4</div>
<div class="t" style="top:762px;left:269px;letter-spacing:-0.241px;">Abgeschlossen:</div>
<div class="t" style="top:762px;right:1240px;letter-spacing:-0.12px;margin-right:-0.12px;">0</div>
<div class="t" style="top:780px;left:269px;letter-spacing:-0.092px;">Abgebrochen:</div>
<div class="t" style="top:780px;right:1240px;letter-spacing:-0.12px;margin-right:-0.12px;">0</div>
<svg style="left:0;top:0" width="1653" height="886" ><circle cx="735" cy="366" r="73.3" fill="none" stroke="#6fb07c" stroke-width="63.6"/><rect x="734.35" y="261" width="1.3" height="63.5" fill="#e6f2e8"/><circle cx="1351" cy="366" r="73.3" fill="none" stroke="#6fb07c" stroke-width="63.6"/><rect x="1350.35" y="261" width="1.3" height="63.5" fill="#e6f2e8"/></svg>
<div class="t" style="top:496px;left:734.4px;transform:translateX(-50%);color:#000080;letter-spacing:0.09px;">Ausführungen: 22</div>
<div class="t" style="top:496px;left:1351.4px;transform:translateX(-50%);color:#000080;letter-spacing:0.09px;">Ausführungen: 22</div>
<div class="sw" style="left:912px;top:333px;background:#f1a256;border:1px solid #c98a4a;"></div>
<div class="t" style="top:333px;left:927px;letter-spacing:-0.008px;">Anstehend (0)</div>
<div class="sw" style="left:912px;top:349px;background:#8c5b95;border:1px solid #6f4977;"></div>
<div class="t" style="top:349px;left:927px;letter-spacing:-0.097px;">Empfangen (0)</div>
<div class="sw" style="left:912px;top:365px;background:#fdee5a;border:1px solid #cdbf4d;"></div>
<div class="t" style="top:365px;left:927px;letter-spacing:0.047px;">Verzögert (0)</div>
<div class="sw" style="left:912px;top:381px;background:#5b8dce;border:1px solid #4a72a8;"></div>
<div class="t" style="top:381px;left:927px;letter-spacing:0.104px;">Gestartet (0)</div>
<div class="sw" style="left:912px;top:397px;background:#6fb07c;border:1px solid #5a9066;"></div>
<div class="t" style="top:397px;left:927px;letter-spacing:-0.185px;">Abgeschlossen (22)</div>
<div class="sw" style="left:912px;top:413px;background:#e0454f;border:1px solid #b73a42;"></div>
<div class="t" style="top:413px;left:927px;letter-spacing:-0.057px;">Abgebrochen (0)</div>
<div class="sw" style="left:1502px;top:349px;background:#6fb07c;border:1px solid #5a9066;"></div>
<div class="t" style="top:349px;left:1516px;letter-spacing:-0.025px;">Erfolgreich (22)</div>
<div class="sw" style="left:1502px;top:365px;background:#e0454f;border:1px solid #b73a42;"></div>
<div class="t" style="top:365px;left:1516px;letter-spacing:-0.137px;">Fehlgeschlagen (0)</div>
<div class="sw" style="left:1502px;top:381px;background:#f1a256;border:1px solid #c98a4a;"></div>
<div class="t" style="top:381px;left:1516px;letter-spacing:-0.026px;">Übersprungen (0)</div>
<div class="sw" style="left:1502px;top:397px;background:#fdee5a;border:1px solid #cdbf4d;"></div>
<div class="t" style="top:397px;left:1516px;letter-spacing:-0.237px;">Keine Lizenz (0)</div>
<svg style="left:0;top:0" width="1653" height="886" shape-rendering="crispEdges"><rect x="465" y="789" width="1069" height="1" fill="#d4d4d4"/><rect x="465" y="754" width="1069" height="1" fill="#d4d4d4"/><rect x="465" y="720" width="1069" height="1" fill="#d4d4d4"/><rect x="465" y="685" width="1069" height="1" fill="#d4d4d4"/><rect x="465" y="651" width="1069" height="1" fill="#d4d4d4"/><rect x="465" y="616" width="1069" height="1" fill="#d4d4d4"/><rect x="465" y="582" width="1069" height="1" fill="#d4d4d4"/><rect x="985" y="582" width="1" height="241" fill="#d4d4d4"/><rect x="1534" y="582" width="1" height="241" fill="#d4d4d4"/><rect x="540.5" y="668.5" width="190" height="155" fill="#f9d9a7" stroke="#c7a877" stroke-width="1"/><rect x="730.5" y="806.5" width="190" height="17" fill="#a5c9a8" stroke="#7a9b7d" stroke-width="1"/><rect x="1067.5" y="599.5" width="190" height="224" fill="#f9d9a7" stroke="#c7a877" stroke-width="1"/><rect x="1257.5" y="806.5" width="190" height="17" fill="#a5c9a8" stroke="#7a9b7d" stroke-width="1"/><rect x="464" y="582" width="1" height="242" fill="#000"/><rect x="464" y="823" width="1071" height="1" fill="#000"/><rect x="461" y="823" width="3" height="1" fill="#000"/><rect x="461" y="789" width="3" height="1" fill="#000"/><rect x="461" y="754" width="3" height="1" fill="#000"/><rect x="461" y="720" width="3" height="1" fill="#000"/><rect x="461" y="685" width="3" height="1" fill="#000"/><rect x="461" y="651" width="3" height="1" fill="#000"/><rect x="461" y="616" width="3" height="1" fill="#000"/><rect x="461" y="582" width="3" height="1" fill="#000"/><rect x="464" y="823" width="1" height="4" fill="#000"/><rect x="985" y="823" width="1" height="4" fill="#000"/><rect x="1534" y="823" width="1" height="4" fill="#000"/></svg>
<div class="t" style="top:819px;right:1199px;letter-spacing:-0.12px;margin-right:-0.12px;">0</div>
<div class="t" style="top:785px;right:1199px;letter-spacing:-0.12px;margin-right:-0.12px;">2</div>
<div class="t" style="top:750px;right:1199px;letter-spacing:-0.12px;margin-right:-0.12px;">4</div>
<div class="t" style="top:716px;right:1199px;letter-spacing:-0.12px;margin-right:-0.12px;">6</div>
<div class="t" style="top:681px;right:1199px;letter-spacing:-0.12px;margin-right:-0.12px;">8</div>
<div class="t" style="top:647px;right:1199px;letter-spacing:-0.125px;margin-right:-0.125px;">10</div>
<div class="t" style="top:612px;right:1199px;letter-spacing:-0.125px;margin-right:-0.125px;">12</div>
<div class="t" style="top:578px;right:1199px;letter-spacing:-0.125px;margin-right:-0.125px;">14</div>
<div class="t" style="top:655px;left:634px;transform:translateX(-50%);letter-spacing:-0.12px;">9</div>
<div class="t" style="top:793px;left:825px;transform:translateX(-50%);letter-spacing:-0.12px;">1</div>
<div class="t" style="top:586px;left:1162px;transform:translateX(-50%);letter-spacing:-0.125px;">13</div>
<div class="t" style="top:793px;left:1353px;transform:translateX(-50%);letter-spacing:-0.12px;">1</div>
<div class="t" style="top:836px;left:730.4px;transform:translateX(-50%);letter-spacing:0.175px;">17.11.2022</div>
<div class="t" style="top:836px;left:1258.3px;transform:translateX(-50%);letter-spacing:0.175px;">18.11.2022</div>
<div class="sw" style="left:1549px;top:699px;background:#f9d9a7;border:1px solid #c7a877;"></div>
<div class="t" style="top:699px;left:1564px;letter-spacing:-0.017px;">Ausführungen</div>
<div class="sw" style="left:1549px;top:715px;background:#a5c9a8;border:1px solid #7a9b7d;"></div>
<div class="t" style="top:715px;left:1564px;letter-spacing:-0.175px;">Clients</div>
<div class="a" style="left:0;top:864px;width:1653px;height:22px;background:#f3f2f1;border-top:1px solid #fafafa;box-sizing:border-box;"></div>
<div class="t" style="top:872px;left:3px;letter-spacing:-0.089px;">© Aagon GmbH 2002 - 2022, all rights reserved</div>
</body>
</html>
